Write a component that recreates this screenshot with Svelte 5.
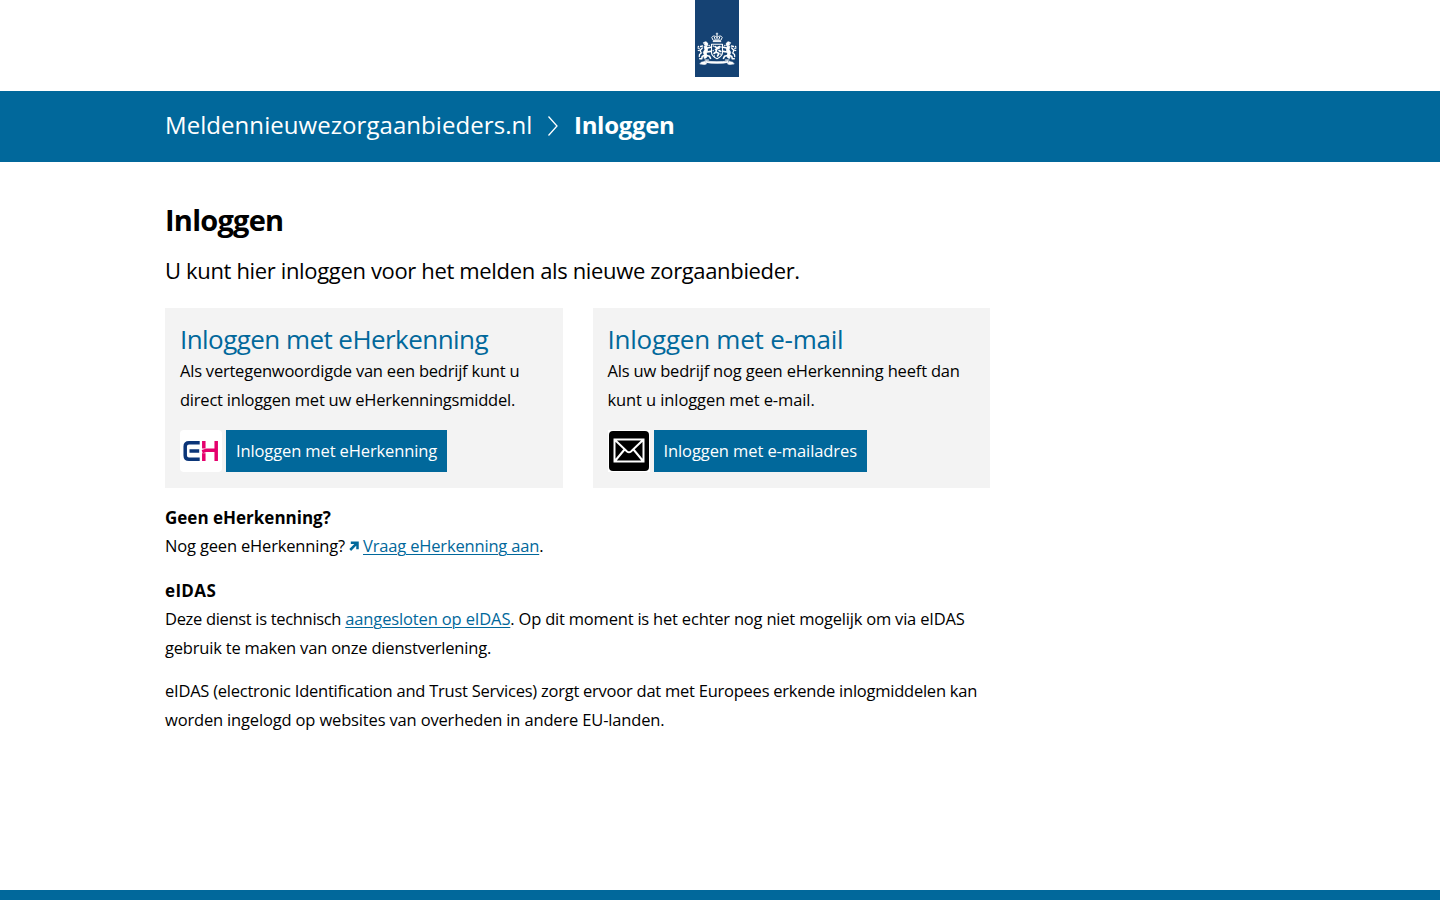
<script>
  const cards = [
    {
      id: 'eh',
      title: 'Inloggen met eHerkenning',
      lines: ['Als vertegenwoordigde van een bedrijf kunt u', 'direct inloggen met uw eHerkenningsmiddel.'],
      button: 'Inloggen met eHerkenning'
    },
    {
      id: 'mail',
      title: 'Inloggen met e-mail',
      lines: ['Als uw bedrijf nog geen eHerkenning heeft dan', 'kunt u inloggen met e-mail.'],
      button: 'Inloggen met e-mailadres'
    }
  ];
</script>

<div class="page">
  <header class="top">
    <svg class="logo" viewBox="0 0 44 77" role="img" aria-label="Rijksoverheid">
      <rect width="44" height="77" fill="#154273" />
      <g fill="none" stroke="#fff" stroke-linecap="round" stroke-linejoin="round">
        <!-- crown -->
        <path d="M18.200 41.600h7.600M18 40l-1.200-2.500c.6-2 3.200-2 5.200 0 2-2 4.600-2 5.200 0L26 40zM22 35v4.500M19.300 37l.9 2.500M24.700 37l-.9 2.500" stroke-width="1" />
        <path d="M22 33v1.600M21.200 33.800h1.600" stroke-width=".8" />
        <!-- shield -->
        <path d="M16.500 44.200h11v8.300c0 3-2.600 4.800-5.500 6.200-2.900-1.400-5.500-3.200-5.500-6.200z" stroke-width="1.100" />
        <path d="M20 46.500l2 1.300 2.700-1.300M20.500 49.500l3.700-1.500M22 48l-1 4 3 1.500-1.500 2.500M19 53.500l2-1.500M24 50.500l1.800 1" stroke-width="1.600" />
        <path d="M18.300 46v.2M18.200 50.500v.2M25.800 54v.2M19.500 56v.1M26 47v.2" stroke-width="1.300" />
        <!-- supporters -->
        {#each ['', 'translate(44 0) scale(-1 1)'] as side}
          <g transform={side}>
            <path d="M8.800 42.500l2.200-.7 1.700 1.400-.2 2.300-2 .3zM9.500 46.500l2.500 0 .5 4-1.300 2.500.8 3-1 2-2 .2.500-3.200-1.200-2.500 1.500-2.800z" fill="#fff" stroke-width=".9" />
            <path d="M11.500 48.200l4-1M12 52l3.500-.6M11.500 55.500l3 .8 1 2M10 55l-2.800 1.500-.5 2.300H4.800" stroke-width="1.600" />
            <path d="M4.300 56.500l.2-2 1.800-1.500-1.200-2.500 2.200-2.500M3.300 50.500l1.700-.5M3 48l1.200.4M3.300 46.500h.2M5.500 46.500l2-.5M14 45.500h.2" stroke-width="1.300" />
            <path d="M10 60h3.500" stroke-width="1" />
            <path d="M5 63.700l1.200-1.500 3.800-.8 1.500 2.500-2 .6z" fill="#fff" stroke-width=".6" />
          </g>
        {/each}
        <!-- ribbon -->
        <path d="M11 60.900c6 1.200 16 1.200 22 0v1.500c-6 1.200-16 1.200-22 0z" stroke-width=".8" fill="#fff" />
      </g>
    </svg>
  </header>

  <nav class="bar">
    <a class="site" href="#home">Meldennieuwezorgaanbieders.nl</a>
    <svg class="chevron" viewBox="0 0 12 22" aria-hidden="true">
      <path d="M1.500 1.500l8.500 9.500-8.500 9.500" fill="none" stroke="#fff" stroke-width="1.300" />
    </svg>
    <span class="current">Inloggen</span>
  </nav>

  <main>
    <h1>Inloggen</h1>
    <p class="intro">U kunt hier inloggen voor het melden als nieuwe zorgaanbieder.</p>

    <div class="cards">
      {#each cards as card}
        <section class="card {card.id}">
          <h2>{card.title}</h2>
          <p>{card.lines[0]}<br /><span class="second">{card.lines[1]}</span></p>
          <div class="action">
            {#if card.id === 'eh'}
              <svg class="icon" viewBox="0 0 42 42" aria-hidden="true">
                <rect width="42" height="42" rx="4" fill="#fff" />
                <path d="M19.700 12.700H9Q5.200 12.700 5.200 16.500v9Q5.200 29.300 9 29.300h10.700M9.500 21h9.700" fill="none" stroke="#0b3578" stroke-width="3.500" />
                <path d="M23.800 11v7.600M23.800 23.200V31M22.200 21.600l4.500-1.400H36M36.200 11v20" fill="none" stroke="#e5006d" stroke-width="3.500" />
              </svg>
            {:else}
              <svg class="icon" viewBox="0 0 42 42" aria-hidden="true">
                <rect width="42" height="42" fill="#fff" />
                <rect x="1" y="1" width="40" height="40" rx="4" fill="#000" />
                <path d="M6.500 9.500h29v22h-29zM7 10l12 11.500q2 1.500 4 0L35 10M7 31l9.500-11.500M35 31l-9.500-11.500" fill="none" stroke="#fff" stroke-width="2" />
              </svg>
            {/if}
            <a class="button" href="#{card.id}">{card.button}</a>
          </div>
        </section>
      {/each}
    </div>

    <h3>Geen eHerkenning?</h3>
    <p class="request">
      Nog geen eHerkenning?
      <a class="external" href="#aanvragen"><svg viewBox="0 0 10 10" aria-hidden="true"><path d="M1.800 1.700h6.700v6.500M8 2.200L1.200 9" fill="none" stroke="#01689b" stroke-width="2.500" /></svg><span>Vraag eHerkenning aan</span></a>.
    </p>

    <h3 class="eidas">eIDAS</h3>
    <p class="service">
      <span class="lead">Deze dienst is technisch</span> <a href="#eidas">aangesloten op eIDAS</a>. Op dit moment is het echter nog niet mogelijk om via eIDAS<br />gebruik te maken van onze dienstverlening.
    </p>
    <p>
      eIDAS (electronic Identification and Trust Services) zorgt ervoor dat met Europees erkende inlogmiddelen kan<br /><span class="last">worden ingelogd op websites van overheden in andere EU-landen.</span>
    </p>
  </main>
  <footer></footer>
</div>

<style>
  :global(body) { background: #fff; }
  .page {
    display: flex;
    flex-direction: column;
    height: 900px;
    overflow: hidden;
    color: #000;
    font: 16.5px/29px 'Open Sans', sans-serif;
    letter-spacing: -0.24px;
    white-space: nowrap;
  }
  .top { height: 91px; padding-left: 695px; }
  .logo { display: block; width: 44px; height: 77px; }
  .bar {
    display: flex;
    align-items: flex-start;
    box-sizing: border-box;
    height: 71px;
    padding: 16px 165px 0;
    background: #01689b;
    color: #fff;
    font-size: 24px;
    line-height: 36px;
  }
  .site { width: 382px; color: #fff; text-decoration: none; letter-spacing: 0.06px; }
  .chevron { width: 12px; height: 22px; margin: 8px 15px 0 0; }
  .current { font-weight: 700; letter-spacing: -0.3px; }
  main { flex: 1; width: 825px; padding: 38px 0 0 165px; }
  h1, h2, h3, p { margin: 0; }
  h1 { font-size: 29px; line-height: 40px; font-weight: 700; letter-spacing: -0.75px; }
  main > .intro { margin: 13px 0 20px; font-size: 22px; line-height: 35px; letter-spacing: -0.35px; }
  .cards { display: grid; grid-template-columns: 1fr 1fr; gap: 30px; margin-bottom: 17px; }
  .card { padding: 15px 15px 16px; background: #f3f3f3; }
  h2 { color: #01689b; font-size: 26px; line-height: 33px; font-weight: 400; letter-spacing: -0.56px; }
  .mail h2 { letter-spacing: -0.23px; }
  .card p { letter-spacing: -0.22px; }
  .card.mail p { letter-spacing: -0.18px; }
  .mail .second { letter-spacing: -0.1px; }
  .action { display: flex; gap: 4px; margin-top: 16px; }
  .icon { width: 42px; height: 42px; }
  .button {
    padding: 0 10px;
    background: #01689b;
    color: #fff;
    line-height: 42px;
    letter-spacing: -0.12px;
    text-decoration: none;
  }
  .mail .button { letter-spacing: -0.09px; }
  h3 { font-size: 17px; line-height: 26px; font-weight: 700; letter-spacing: 0; }
  h3.eidas { margin-top: 18px; letter-spacing: 0.35px; }
  .service + p { margin-top: 14px; }
  .request { letter-spacing: -0.17px; }
  .service { letter-spacing: -0.2px; }
  .lead { letter-spacing: -0.32px; }
  .service a { letter-spacing: -0.14px; }
  .last { letter-spacing: -0.16px; }
  main a:not(.button) { color: #01689b; text-decoration: underline; text-decoration-thickness: 1px; text-underline-offset: 2px; }
  main a.external:not(.button) { text-decoration: none; }
  .external svg { width: 10px; height: 10px; margin-right: 4px; vertical-align: 1px; }
  .external span { text-decoration: underline; text-decoration-thickness: 1px; text-underline-offset: 2px; }
  footer { height: 10px; background: #01689b; }
</style>
